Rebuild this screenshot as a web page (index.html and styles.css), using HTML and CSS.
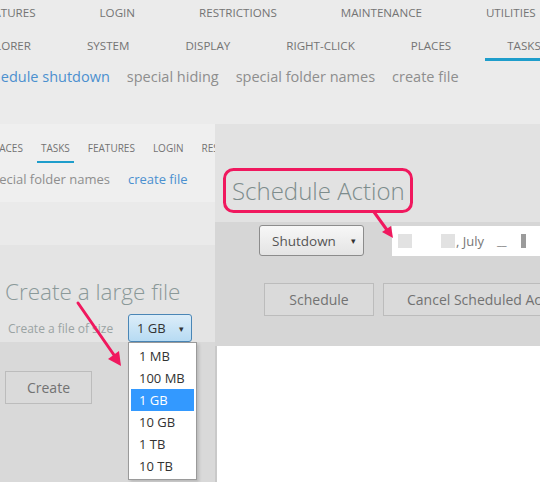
FILE: index.html
```html
<!DOCTYPE html>
<html lang="en">
<head>
    <meta charset="UTF-8">
    <meta name="viewport" content="width=device-width, initial-scale=1.0">
    <title>Tweaker - Tasks</title>
    <link rel="stylesheet" href="styles.css">
</head>
<body>
    <div class="app">
        <nav class="tabs tabs-main">
            <a href="#">Features</a>
            <a href="#">Login</a>
            <a href="#">Restrictions</a>
            <a href="#">Maintenance</a>
            <a href="#">Utilities</a>
        </nav>
        <nav class="tabs tabs-sub">
            <a href="#">Explorer</a>
            <a href="#">System</a>
            <a href="#">Display</a>
            <a href="#">Right-click</a>
            <a href="#">Places</a>
            <a href="#" class="activo">Tasks</a>
        </nav>
        <nav class="links">
            <a href="#" class="activo">schedule shutdown</a>
            <a href="#">special hiding</a>
            <a href="#">special folder names</a>
            <a href="#">create file</a>
        </nav>

        <div class="panes">
            <!-- panel izquierdo: crear archivo -->
            <section class="pane-left">
                <nav class="mini-tabs">
                    <a href="#">Places</a>
                    <a href="#" class="activo">Tasks</a>
                    <a href="#">Features</a>
                    <a href="#">Login</a>
                    <a href="#">Restrictions</a>
                </nav>
                <nav class="mini-links">
                    <a href="#">special folder names</a>
                    <a href="#" class="activo">create file</a>
                </nav>

                <h2 class="titulo-left">Create a large file</h2>
                <div class="size-row">
                    <span class="size-label">Create a file of size</span>
                    <div class="combo">
                        <button class="combo-btn">1 GB <span class="caret">&#9662;</span></button>
                        <ul class="combo-list">
                            <li>1 MB</li>
                            <li>100 MB</li>
                            <li class="sel">1 GB</li>
                            <li>10 GB</li>
                            <li>1 TB</li>
                            <li>10 TB</li>
                        </ul>
                    </div>
                </div>
                <button class="btn btn-create">Create</button>
            </section>

            <!-- panel derecho: programar apagado -->
            <section class="pane-right">
                <h2 class="titulo-right">Schedule Action</h2>
                <div class="action-row">
                    <button class="btn-accion">Shutdown <span class="caret">&#9662;</span></button>
                    <div class="fecha">
                        <span class="tapado"></span>
                        <span class="tapado t2"></span>
                        <span class="fecha-txt">, July</span>
                        <span class="fecha-sep">__</span>
                        <span class="tapado oscuro"></span>
                    </div>
                </div>
                <div class="btn-row">
                    <button class="btn btn-schedule">Schedule</button>
                    <button class="btn btn-cancel">Cancel Scheduled Action</button>
                </div>
                <div class="salida"></div>
            </section>
        </div>

        <!-- anotaciones encima de la captura -->
        <svg class="notas" width="540" height="482" viewBox="0 0 540 482">
            <rect x="224.5" y="169.5" width="187" height="42" rx="9" fill="none" stroke="#f0185e" stroke-width="3"/>
            <line x1="374" y1="212" x2="387" y2="230" stroke="#f0185e" stroke-width="3" stroke-linecap="round"/>
            <polygon points="393,238 391,226 382,232" fill="#f0185e"/>
            <line x1="78" y1="303" x2="114" y2="355" stroke="#f0185e" stroke-width="3" stroke-linecap="round"/>
            <polygon points="121,366 119,351 108,359" fill="#f0185e"/>
        </svg>
    </div>
</body>
</html>
```

FILE: styles.css
```css
html, body {
    margin: 0;
    padding: 0;
}
body {
    width: 540px;
    height: 482px;
    overflow: hidden;
    background: #ebebeb;
    font-family: 'Open Sans', sans-serif;
    color: #6e6e6e;
}
a {
    text-decoration: none;
    color: inherit;
}
.app {
    position: relative;
    width: 540px;
    height: 482px;
    overflow: hidden;
}
.tabs {
    display: flex;
    white-space: nowrap;
    text-transform: uppercase;
    font-size: 11.6px;
    color: #747474;
}
.tabs-main {
    height: 26px;
    line-height: 26px;
    gap: 64px;
    margin-left: -19px;
}
.tabs-sub {
    margin-left: -47px;
}
.tabs-sub a {
    padding: 13px 22px 6px;
    line-height: 13px;
    border-bottom: 3px solid transparent;
    margin-right: 12px;
}
.tabs-sub a.activo {
    border-bottom-color: #1e9dcb;
}
.links {
    display: flex;
    gap: 17px;
    white-space: nowrap;
    height: 60px;
    padding-top: 3px;
    line-height: 26px;
    margin-left: -22px;
    font-size: 14.5px;
    color: #8e8e8e;
}
.links a.activo {
    color: #4b90cf;
}

.panes {
    display: flex;
    height: 358px;
}
.pane-left {
    width: 215px;
    flex: none;
    overflow: hidden;
    background: linear-gradient(#efefef 0, #efefef 78px, #eaeaea 78px, #eaeaea 121px, #e4e4e4 121px, #e4e4e4 218px, #d9d9d9 218px);
}
.mini-tabs {
    display: flex;
    gap: 10px;
    margin-left: -16px;
    padding-top: 18px;
    white-space: nowrap;
    text-transform: uppercase;
    font-size: 10px;
    color: #737373;
}
.mini-tabs a {
    padding: 0 4px 6px;
    line-height: 13px;
    border-bottom: 2px solid transparent;
}
.mini-tabs a.activo {
    border-bottom-color: #1e9dcb;
}
.mini-links {
    display: flex;
    gap: 18px;
    margin: 7px 0 0 -15px;
    line-height: 18px;
    white-space: nowrap;
    font-size: 13px;
    color: #8e8e8e;
}
.mini-links a.activo {
    color: #4b90cf;
}
.titulo-left {
    margin: 89px 0 0 5px;
    font-size: 22.5px;
    font-weight: 300;
    line-height: 30px;
    color: #8b9999;
}
.size-row {
    display: flex;
    align-items: center;
    margin: 7px 0 0 8px;
}
.size-label {
    font-size: 12px;
    color: #9aa3a3;
    width: 120px;
    white-space: nowrap;
}
.combo {
    position: relative;
}
.combo-btn {
    width: 64px;
    height: 28px;
    padding: 0 0 0 8px;
    display: flex;
    align-items: center;
    justify-content: space-between;
    font-family: inherit;
    font-size: 13px;
    color: #333;
    border: 1px solid #4a86b6;
    border-radius: 3px;
    background: linear-gradient(#dcedf9, #b7dbf3);
}
.caret {
    font-size: 9px;
    margin-right: 7px;
    color: #333;
}
.combo-list {
    position: absolute;
    left: 0;
    top: 28px;
    width: 69px;
    margin: 0;
    padding: 2px 2px;
    list-style: none;
    background: white;
    border: 1px solid #9a9a9a;
    box-sizing: border-box;
    box-shadow: 2px 2px 3px rgba(0,0,0,0.15);
    font-size: 13px;
    color: #333;
}
.combo-list li {
    height: 22px;
    line-height: 22px;
    padding-left: 8px;
}
.combo-list li.sel {
    background: #3399ff;
    color: white;
}
.btn {
    font-family: inherit;
    font-size: 14px;
    color: #727272;
    background: #dadada;
    border: 1px solid #bcbcbc;
    height: 33px;
}
.btn-create {
    display: block;
    width: 87px;
    margin: 29px 0 0 5px;
}

.pane-right {
    flex: 1;
    display: flex;
    flex-direction: column;
    background: linear-gradient(#e2e2e2 0, #e2e2e2 98px, #d6d6d6 98px);
}
.titulo-right {
    margin: 52px 0 0 17px;
    font-size: 24px;
    font-weight: 300;
    line-height: 30px;
    color: #7d8c8c;
}
.action-row {
    display: flex;
    align-items: center;
    gap: 28px;
    margin: 19px 0 0 44px;
}
.btn-accion {
    width: 105px;
    height: 31px;
    display: flex;
    align-items: center;
    justify-content: space-between;
    padding: 0 0 0 12px;
    font-family: inherit;
    font-size: 13.5px;
    color: #555;
    border: 1px solid #8c8c8c;
    border-radius: 3px;
    background: linear-gradient(#f7f7f7, #e4e4e4);
}
.fecha {
    flex: none;
    width: 160px;
    height: 30px;
    background: white;
    display: flex;
    align-items: center;
    font-size: 13px;
    color: #777;
}
.tapado {
    width: 14px;
    height: 14px;
    background: #e2e2e2;
    margin-left: 6px;
}
.tapado.t2 {
    margin-left: 29px;
}
.fecha-txt {
    margin-left: 1px;
}
.fecha-sep {
    margin-left: 13px;
    font-size: 11px;
}
.tapado.oscuro {
    width: 5px;
    background: #9b9b9b;
    margin-left: 14px;
}
.btn-row {
    display: flex;
    gap: 9px;
    margin: 27px 0 0 49px;
    white-space: nowrap;
}
.btn-schedule {
    width: 110px;
    flex: none;
}
.btn-cancel {
    flex: none;
    width: 170px;
    text-align: left;
    padding-left: 23px;
}
.salida {
    flex: 1;
    margin-top: 30px;
    background: white;
    border-left: 2px solid #c9c9c9;
}
.notas {
    position: absolute;
    left: 0;
    top: 0;
    pointer-events: none;
}
```
